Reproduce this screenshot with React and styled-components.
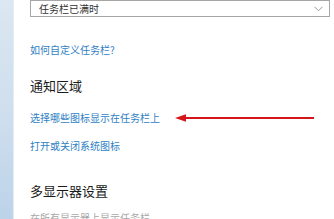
import React from "react";
import styled, { createGlobalStyle } from "styled-components";

const Global = createGlobalStyle`
  html, body {
    margin: 0;
    padding: 0;
    background: #ffffff;
    overflow: hidden;
  }
  body {
    font-family: "Noto Sans CJK SC", "Noto Sans", sans-serif;
  }
`;

const Page = styled.div`
  display: flex;
  width: 334px;
  height: 219px;
  overflow: hidden;
`;

const SideStrip = styled.div`
  width: 13px;
  flex-shrink: 0;
  background: linear-gradient(180deg, #dbe7f2 0%, #cfdfee 50%, #bcd3e8 100%);
  border-right: 1px solid #e4edf6;
`;

const Content = styled.div`
  flex: 1;
  padding-left: 16px;
  display: flex;
  flex-direction: column;
`;

const Select = styled.div`
  box-sizing: border-box;
  width: 300px;
  height: 23px;
  border: 1px solid #a6a6a6;
  display: flex;
  align-items: center;
  justify-content: space-between;
  padding: 0 6px 0 8px;
  font-size: 10px;
  color: #333;
`;

const LinkText = styled.div`
  font-size: 10px;
  line-height: 16px;
  color: #2f7fc4;
  margin-top: ${(p) => p.$mt}px;
  display: flex;
  align-items: center;
`;

const Heading = styled.div`
  font-size: 13px;
  line-height: 20px;
  color: #1b1b1b;
  margin-top: ${(p) => p.$mt}px;
`;

const Note = styled.div`
  font-size: 10px;
  line-height: 16px;
  color: #a8a8a8;
  margin-top: ${(p) => p.$mt}px;
`;

const Arrow = styled.svg`
  margin-left: 14px;
  flex-shrink: 0;
`;

const Chevron = () => (
  <svg width="9" height="6" viewBox="0 0 9 6">
    <path d="M0.5 0.8 L4.5 4.8 L8.5 0.8" fill="none" stroke="#9a9a9a" strokeWidth="1" />
  </svg>
);

export default function App() {
  return (
    <Page>
      <Global />
      <SideStrip />
      <Content>
        <Select>
          <span>任务栏已满时</span>
          <Chevron />
        </Select>
        <LinkText $mt={25}>如何自定义任务栏?</LinkText>
        <Heading $mt={18}>通知区域</Heading>
        <LinkText $mt={14}>
          选择哪些图标显示在任务栏上
          <Arrow width="142" height="10" viewBox="0 0 142 10">
            <path d="M1 5 L12 1.2 L12 8.8 Z" fill="#d4161b" />
            <path d="M10 5 L140 5" stroke="#d4161b" strokeWidth="2.2" />
          </Arrow>
        </LinkText>
        <LinkText $mt={12}>打开或关闭系统图标</LinkText>
        <Heading $mt={27}>多显示器设置</Heading>
        <Note $mt={9}>在所有显示器上显示任务栏</Note>
      </Content>
    </Page>
  );
}
